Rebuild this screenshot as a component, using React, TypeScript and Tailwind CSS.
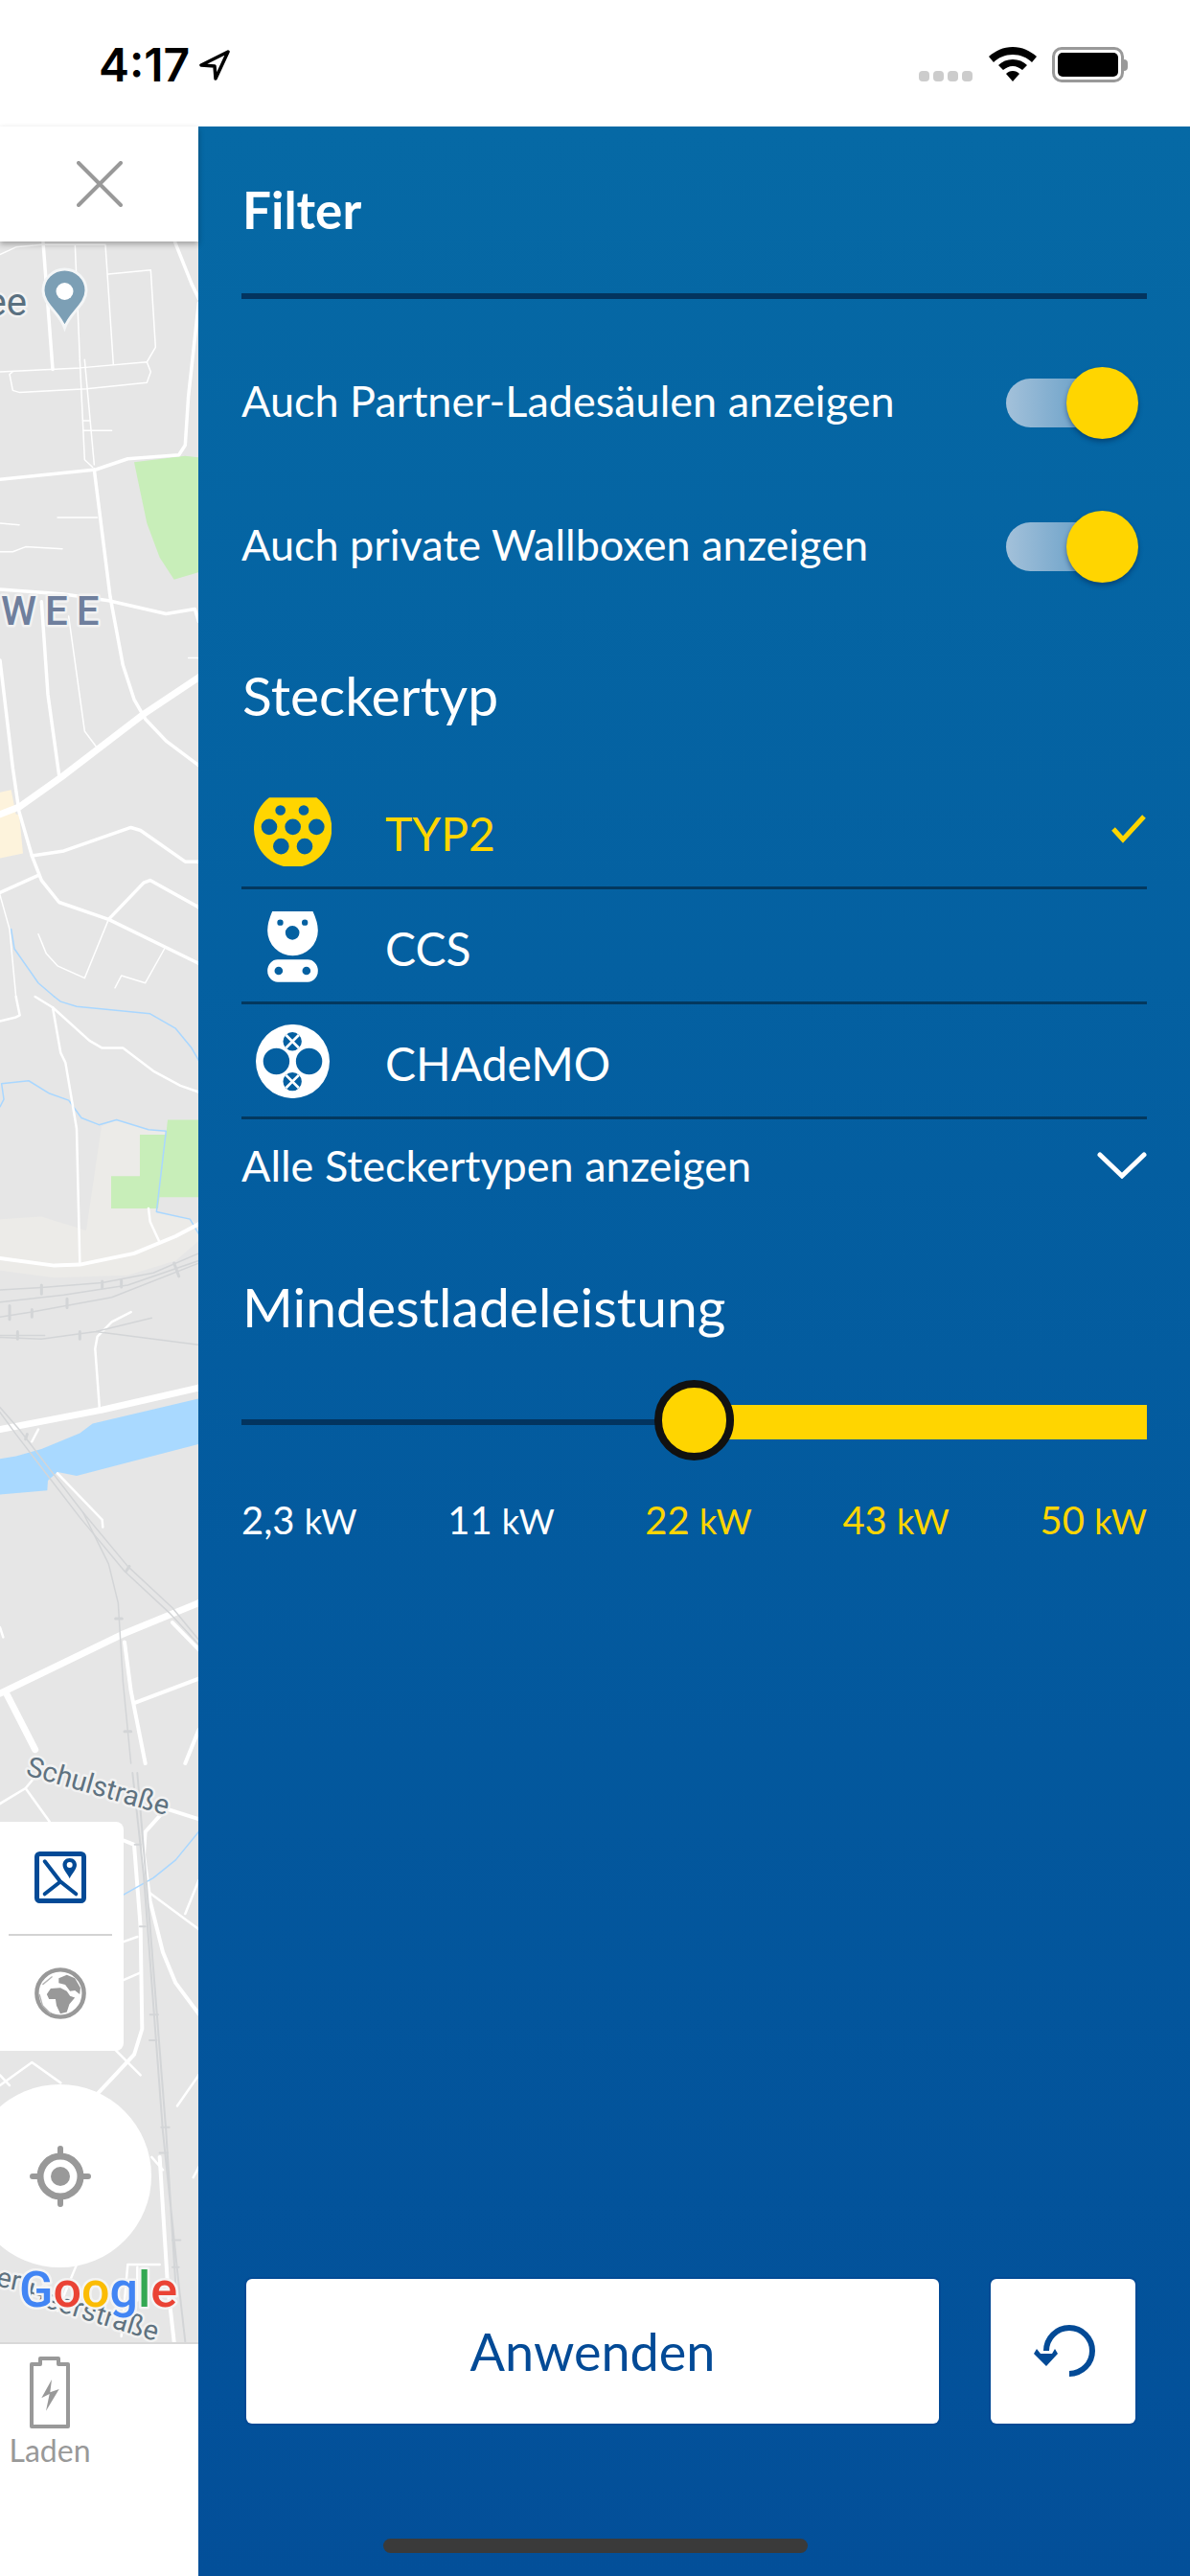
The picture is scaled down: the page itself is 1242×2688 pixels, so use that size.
const circle = (cx: number, cy: number, r: number) =>
  `M${cx - r} ${cy}a${r} ${r} 0 1 0 ${r * 2} 0a${r} ${r} 0 1 0 ${-r * 2} 0Z`

function Type2Icon() {
  const holes = [
    [155, 140, 16], [228, 140, 16], [120, 192, 25], [194, 192, 25], [268, 192, 25], [157, 253, 25], [231, 253, 25],
  ]
  return (
    <svg viewBox="72 100 243 215" className="w-[81px] h-[72px]">
      <path fillRule="evenodd" fill="#ffd500" d={`M120 100H268A122 122 0 1 1 120 100Z${holes.map(h => circle(h[0], h[1], h[2])).join('')}`} />
    </svg>
  )
}

function CcsIcon() {
  return (
    <svg viewBox="120 456 158 222" className="w-[53px] h-[74px]">
      <path fillRule="evenodd" fill="#fff" d={`M135 456H262Q278 490 278 516A79 79 0 0 1 120 516Q120 490 135 456Z${circle(160, 491, 9.5)}${circle(237, 491, 9.5)}${circle(198, 523, 22)}`} />
      <path fillRule="evenodd" fill="#fff" d={`M152 607H246A32 35 0 0 1 246 677H152A32 35 0 0 1 152 607Z${circle(155, 642, 13)}${circle(242, 642, 13)}`} />
    </svg>
  )
}

function ChademoIcon() {
  return (
    <svg viewBox="81 812 230 230" className="w-[77px] h-[77px]">
      <path fillRule="evenodd" fill="#fff" d={`${circle(196, 927, 115)}${circle(145, 927, 41)}${circle(247, 927, 41)}${circle(195, 865, 29)}${circle(195, 990, 29)}`} />
      <path stroke="#fff" strokeWidth="8" d="M175 845L215 885M215 845L175 885M175 970L215 1010M215 970L175 1010" />
    </svg>
  )
}

function Toggle() {
  return (
    <div className="relative w-[138px] h-[75px] flex items-center">
      <div className="w-[100px] h-[51px] rounded-l-full bg-gradient-to-r from-[#a3c1da] to-[#5e9ac4]" />
      <div className="absolute right-0 top-0 w-[75px] h-[75px] rounded-full bg-[#ffd500] shadow-[0_3px_5px_rgba(0,30,70,0.45)]" />
    </div>
  )
}

function PlugRow({ label, active, icon }: { label: string; active?: boolean; icon: React.ReactNode }) {
  return (
    <div className="h-[120px] flex items-center border-b-[3px] border-[#03385f]">
      <div className="w-[150px] pl-[6px] pr-[50px] flex justify-center shrink-0 mt-[2px]">{icon}</div>
      <span className={`text-[48px] leading-[60px] flex-1 pt-[7px] ${active ? 'text-[#ffd500]' : 'text-white'}`}>{label}</span>
      {active && (
        <svg viewBox="0 0 36 30" className="w-[36px] h-[30px] mr-[1px] mb-[3px]" fill="none" stroke="#ffd500" strokeWidth="5">
          <path d="M2 15L12 26L34 2" />
        </svg>
      )}
    </div>
  )
}

function PowerLabel({ value, active }: { value: string; active?: boolean }) {
  return (
    <span className={`text-[40px] leading-[50px] ${active ? 'text-[#ffd500]' : 'text-white'}`}>
      {value} <span className="text-[36px]">kW</span>
    </span>
  )
}

function MapCanvas() {
  const road = { fill: 'none', stroke: '#fff', strokeLinejoin: 'round', strokeLinecap: 'round' } as const
  const rail = { ...road, stroke: '#d3d5d7' }
  const water = { ...road, stroke: '#a9d7ff' }
  return (
    <svg viewBox="0 252 207 2192" className="absolute inset-0 w-[207px] h-[2192px] [&_path]:[vector-effect:non-scaling-stroke]">
      {/* top part, traced in crop coordinates */}
      <g transform="translate(0 240) scale(0.3333 0.5102)">
        <path fill="#c8eeb9" d="M420 475L460 600L500 670L545 715L622 700V465L580 462Z" />
        <path fill="#fdf3dc" d="M0 1150L35 1145L50 1195L60 1195L72 1275L0 1285Z" />
        <g {...road} strokeWidth="1.5">
          <path d="M0 50L50 35L130 30H330M235 30L250 265M330 30L355 275M340 90L472 82L487 240L460 270" />
          <path d="M0 290L250 282L460 270L472 290L460 312L270 325L60 332L40 328L30 295L40 290" />
          <path d="M250 265L265 470L290 485M265 265L295 480M260 390H280M260 410H350" />
          <path d="M0 600L60 603M180 588H305M0 658H40L80 648L195 652M590 875H622" />
          <path d="M215 790L265 1025L305 1060M360 1550L380 1525L455 1540L515 1470" />
          <path d="M340 1410L265 1530L180 1505L145 1480L120 1440M0 1360L30 1430L50 1568" />
        </g>
        <g {...road} strokeWidth="3.5">
          <path d="M135 25L165 285M548 25L600 110L622 140M622 150L590 340L580 440L560 460L400 468L300 490L0 510" />
          <path d="M295 490L345 750L385 890L420 960L455 1000L520 1045L622 1095" />
          <path d="M0 735L200 745L340 758L520 785L610 775L622 800M130 760L150 950L185 1115" />
          <path d="M0 880L40 1100L60 1190L100 1280L130 1330L185 1375L340 1410L622 1500" />
          <path d="M100 1280L200 1270L410 1222L440 1228L580 1292H622M0 1355L120 1320M340 1410L450 1335L470 1330L622 1385" />
        </g>
        <path {...road} strokeWidth="7" d="M0 1195L60 1180L190 1120L450 990L622 915" />
        <path {...water} strokeWidth="1.5" d="M35 1430L45 1470L120 1540L170 1568" />
      </g>
      {/* middle part */}
      <g transform="translate(0 1040) scale(0.3333 0.5102)">
        <path fill="#ecebe8" d="M0 455L130 450L270 478L318 265L365 252L465 272L520 275L490 440L595 455L622 465V500L550 540L400 570L170 575L0 560Z" />
        <path fill="#c8eeb9" d="M525 252H622V410H500L495 433H348V367H438V282H520Z" />
        <path fill="#a9d9ff" d="M0 945L50 940L130 925L250 893L290 873L622 822V915L240 980L180 972L150 990L148 1010L0 1018Z" />
        <g {...water} strokeWidth="1.5">
          <path d="M170 0L190 10L240 20L470 35L550 65L600 105L622 130" />
          <path d="M0 225L12 210L5 178L90 172L155 198L215 212L255 248L310 262L365 252L465 272L520 275L490 440L595 455L622 485" />
        </g>
        <g {...road} strokeWidth="2.5">
          <path d="M0 50L50 42L62 38L50 0M110 0L165 22L280 90L320 105L385 105L480 152L565 182L622 195" />
          <path d="M165 22L190 115L205 135L240 270L250 545M465 433L470 460L498 500M120 885L100 910M180 975L320 1070L322 1085" />
          <path d="M410 645L350 665L305 695L298 720L312 845M0 1290L10 1310" />
        </g>
        <path {...road} strokeWidth="4" d="M0 535L170 550L250 548L420 525L550 490L622 465M390 1320L410 1420L455 1568M420 1445L622 1395M540 1280L622 1335M622 1500L580 1568" />
        <path {...road} strokeWidth="7" d="M0 885L120 870L320 845L622 800M0 1425L380 1305L622 1240M20 1425L110 1540" />
        <g {...rail} strokeWidth="1.5">
          <path d="M0 600L130 595L320 585L480 565L622 525M0 625L200 610L400 590L622 540M0 655L100 645L350 615L622 545" />
          <path d="M0 693H140M0 697L130 700L300 685L475 657M300 685L622 712" />
          <path d="M0 840L60 885L160 970L260 1055L400 1165L540 1250L622 1315M0 850L50 895L150 980L250 1065L390 1175L530 1260L622 1325" />
          <path d="M260 1055L340 1160L370 1240L385 1400L410 1568" />
          <path strokeWidth="3" d="M130 590V608M210 618V636M320 582V596M380 580V594M30 632V660M100 640V655M545 545L560 572M55 685V700M250 685V700M85 895L80 905M405 1165L395 1175M362 1272H382M390 1503H410" />
        </g>
      </g>
      {/* bottom part */}
      <g transform="translate(0 1850) scale(0.3333 0.5345)">
        <g {...road} strokeWidth="4">
          <path d="M520 70L622 90M520 70L455 115L450 160L470 250L510 350L550 410L622 470M380 130L420 140L440 300L445 500L420 550L360 590L300 630" />
          <path d="M500 750L525 1000L545 1110" />
        </g>
        <g {...road} strokeWidth="2.5">
          <path d="M0 60L80 30L120 0M80 30L155 95M470 235L622 305M622 210L580 275M385 330L430 320M385 405L440 390" />
          <path d="M0 610L100 565L190 605M360 540L440 590M0 590L30 610M622 590L555 650M475 750L510 775M622 770L605 790" />
          <path d="M180 1050L240 960M380 1100L400 960H500M430 965V1030" />
        </g>
        <path {...water} strokeWidth="1.5" d="M380 240L480 205L550 170L622 115" />
        <g {...rail} strokeWidth="2">
          <path d="M415 0L450 200L510 700L560 1000L580 1110M430 0L470 300L520 700L550 1000" />
          <path d="M422 140H440M438 300H455M470 472H495M468 522H490M505 692H530M500 742H525M540 912H565M540 965H560" />
        </g>
      </g>
      <path fill="#7c9fb5" stroke="#f4f6f7" strokeWidth="3" d="M67.5 281C55 281 45 291 45 303C45 318 62 326 67.5 342C73 326 90 318 90 303C90 291 80 281 67.5 281Z" />
      <circle cx="67.5" cy="304" r="9" fill="#fff" />
      <g style={{ fontFamily: 'Roboto, sans-serif', paintOrder: 'stroke' }} stroke="#f2f2f2" strokeWidth="5" strokeLinejoin="round">
        <text x="28" y="329" textAnchor="end" fontSize="40" fill="#5a7080">ee</text>
        <text x="1" y="652" fontSize="42" fontWeight="500" letterSpacing="9" fill="#6f7f9d">WEE</text>
        <text x="26" y="1852" fontSize="29" fill="#5f7280" transform="rotate(16 26 1852)">Schulstraße</text>
        <text x="-5" y="2385" fontSize="29" fill="#5f7280" transform="rotate(12 -5 2385)">er</text>
        <text x="25" y="2401" fontSize="29" fill="#5f7280" transform="rotate(17 25 2401)">Heerstraße</text>
      </g>
    </svg>
  )
}

export default function App() {
  return (
    <div className="relative w-[1242px] h-[2688px] flex flex-col overflow-hidden bg-white font-['Lato',sans-serif]">
      {/* status bar */}
      <div className="h-[132px] shrink-0 flex items-start pt-[42px] pl-[103px] pr-[65px]">
        <span className="w-[93px] text-[48px] leading-[52px] font-semibold text-black font-['Inter',sans-serif] whitespace-nowrap">4:17</span>
        <svg viewBox="0 0 32 32" className="w-[32px] h-[32px] ml-[12px] mt-[10px]" fill="none" stroke="#000" strokeWidth="3.5" strokeLinejoin="round">
          <path d="M30 2L2 16L16 17L17 30Z" />
        </svg>
        <div className="flex-1" />
        <div className="flex gap-[4px] mt-[32px]">
          <span className="w-[11px] h-[11px] rounded-[4px] bg-[#cccccc]" />
          <span className="w-[11px] h-[11px] rounded-[4px] bg-[#cccccc]" />
          <span className="w-[11px] h-[11px] rounded-[4px] bg-[#cccccc]" />
          <span className="w-[11px] h-[11px] rounded-[4px] bg-[#cccccc]" />
        </div>
        <svg viewBox="0 0 50 36" className="w-[50px] h-[36px] ml-[17px] mt-[7px]">
          <path d="M25 0C15 0 7 4 0 10L5 16C10 11 17 8 25 8C33 8 40 11 45 16L50 10C43 4 35 0 25 0Z" />
          <path d="M25 13C19 13 14 15 10 19L15 24C18 22 21 20 25 20C29 20 32 22 35 24L40 19C36 15 31 13 25 13Z" />
          <path d="M25 25C22 25 20 26 18 28L25 36L32 28C30 26 28 25 25 25Z" />
        </svg>
        <div className="flex items-center ml-[16px] mt-[7px]">
          <div className="w-[75px] h-[37px] rounded-[10px] border-[3px] border-[#999999] p-[3px]">
            <div className="w-full h-full rounded-[5px] bg-black" />
          </div>
          <div className="w-[4px] h-[12px] rounded-r-full bg-[#999999]" />
        </div>
      </div>

      <div className="flex-1 flex min-h-0">
        {/* left side: map behind the panel */}
        <div className="w-[207px] shrink-0 flex flex-col">
          <div className="h-[120px] shrink-0 bg-white flex items-center justify-center pl-[1px] relative z-10 shadow-[0_3px_6px_rgba(0,0,0,0.3)]">
            <svg viewBox="0 0 48 48" className="w-[48px] h-[48px]" stroke="#999999" strokeWidth="4" strokeLinecap="round">
              <path d="M2 2L46 46M46 2L2 46" />
            </svg>
          </div>
          <div className="flex-1 relative bg-[#e6e6e6] overflow-hidden">
            <MapCanvas />
            <div className="absolute left-0 top-[1649px] w-[129px] h-[239px] bg-white rounded-r-[8px] flex flex-col items-center pr-[3px]">
              <svg viewBox="0 0 54 54" className="w-[54px] h-[54px] mt-[31px]" fill="none">
                <rect x="2.5" y="2.5" width="49" height="49" rx="3" stroke="#034a96" strokeWidth="5" />
                <path d="M10.7 10.3L26.7 31L43.3 44.3M10.7 44.3L26.7 31.7" stroke="#034a96" strokeWidth="4" strokeLinecap="round" />
                <path fill="#034a96" fillRule="evenodd" d="M36.7 7C32 7 29.5 10.5 29.5 14C29.5 19 34.5 23 36.7 28.3C39 23 44 19 44 14C44 10.5 41.4 7 36.7 7ZM36.7 11A3 3 0 1 1 36.7 17A3 3 0 1 1 36.7 11Z" />
              </svg>
              <div className="w-[108px] h-[2px] bg-[#d3d3d3] mt-[32px]" />
              <svg viewBox="50 397 160 160" className="w-[54px] h-[54px] mt-[33px]">
                <circle cx="130" cy="477" r="73" fill="none" stroke="#999999" strokeWidth="13" />
                <path fill="#999999" d="M125 430L150 420L175 430L192 460L190 480L175 468L160 470L145 450L125 445Z" />
                <path fill="#999999" d="M88 480L100 462L130 460L150 470L160 485L175 490L158 510L150 535L130 540L118 515L115 495L95 495Z" />
                <path fill="none" stroke="#b5b5b5" strokeWidth="4" d="M65 480L75 515L100 540M75 450L105 425" />
              </svg>
            </div>
            <div className="absolute left-[-33px] top-[1923px] w-[191px] h-[191px] rounded-full bg-white flex items-center justify-center">
              <svg viewBox="0 0 64 64" className="w-[64px] h-[64px]" fill="none" stroke="#999999">
                <circle cx="32" cy="32" r="21" strokeWidth="7" />
                <circle cx="32" cy="32" r="10" fill="#999999" stroke="none" />
                <path strokeWidth="6" strokeLinecap="round" d="M32 3V10M32 54V61M3 32H10M54 32H61" />
              </svg>
            </div>
            <svg viewBox="0 2360 207 70" className="absolute left-0 top-[2108px] w-[207px] h-[70px]">
              <text x="20" y="2407" fontSize="52" fontWeight="500" style={{ fontFamily: 'Roboto, sans-serif', paintOrder: 'stroke' }} stroke="#f4f4f4" strokeWidth="5" strokeLinejoin="round">
                <tspan fill="#4285f4">G</tspan>
                <tspan fill="#ea4335">o</tspan>
                <tspan fill="#fbbc05">o</tspan>
                <tspan fill="#4285f4">g</tspan>
                <tspan fill="#34a853">l</tspan>
                <tspan fill="#ea4335">e</tspan>
              </text>
            </svg>
          </div>
          <div className="h-[244px] shrink-0 bg-white border-t-2 border-[#d8d8d8] pt-[13px]">
            <div className="w-[104px] flex flex-col items-center">
              <svg viewBox="0 0 44 76" className="w-[44px] h-[76px]" fill="none">
                <path d="M3 8H12V2H31V8H41V73H3Z" stroke="#999999" strokeWidth="4" strokeLinejoin="round" />
                <path d="M24 24L13.3 43.3L21.7 39L18 56.7L31.7 34L22.3 37.3Z" fill="#999999" />
              </svg>
              <span className="text-[32px] leading-[36px] text-[#999999] mt-[4px]">Laden</span>
            </div>
          </div>
        </div>

        {/* filter panel */}
        <div className="flex-1 flex flex-col bg-gradient-to-b from-[#0669a5] to-[#034f99] pl-[45px] pr-[45px] pb-[159px]">
          <div className="h-[180px] shrink-0 border-b-[6px] border-[#03345f] pt-[52px] pl-[1px]">
            <h1 className="text-[53px] leading-[70px] font-bold text-white">Filter</h1>
          </div>
          <div className="h-[33px] shrink-0" />
          <div className="h-[150px] shrink-0 flex items-center justify-between pr-[9px]">
            <span className="text-[45px] leading-[60px] text-white pb-[4px]">Auch Partner-Ladesäulen anzeigen</span>
            <Toggle />
          </div>
          <div className="h-[150px] shrink-0 flex items-center justify-between pr-[9px]">
            <span className="text-[45px] leading-[60px] text-white pb-[4px]">Auch private Wallboxen anzeigen</span>
            <Toggle />
          </div>
          <div className="h-[163px] shrink-0 pt-[45px] pl-[1px]">
            <h2 className="text-[57px] leading-[70px] text-white">Steckertyp</h2>
          </div>
          <PlugRow label="TYP2" active icon={<Type2Icon />} />
          <PlugRow label="CCS" icon={<CcsIcon />} />
          <PlugRow label="CHAdeMO" icon={<ChademoIcon />} />
          <div className="h-[96px] shrink-0 flex items-center justify-between">
            <span className="text-[45px] leading-[60px] text-white">Alle Steckertypen anzeigen</span>
            <svg viewBox="0 0 52 28" className="w-[52px] h-[28px]" fill="none" stroke="#fff" strokeWidth="5" strokeLinecap="round">
              <path d="M3 3L26 25L49 3" />
            </svg>
          </div>
          <div className="h-[76px] shrink-0 mt-[64px] pl-[1px]">
            <h2 className="text-[57px] leading-[70px] text-white">Mindestladeleistung</h2>
          </div>
          <div className="relative h-[84px] shrink-0 mt-[36px] flex items-center">
            <div className="w-[470px] h-[6px] bg-[#03345f] mt-[4px]" />
            <div className="flex-1 h-[36px] bg-[#ffd500] mt-[3px]" />
            <div className="absolute left-[431px] top-0 w-[83px] h-[84px] rounded-full bg-[#ffd500] border-[8px] border-[#111111]" />
          </div>
          <div className="flex justify-between mt-[37px]">
            <PowerLabel value="2,3" />
            <PowerLabel value="11" />
            <PowerLabel value="22" active />
            <PowerLabel value="43" active />
            <PowerLabel value="50" active />
          </div>
          <div className="flex-1" />
          <div className="flex pl-[5px] pr-[12px] gap-[54px]">
            <button className="flex-1 h-[151px] rounded-[6px] bg-white text-[54px] text-[#034a96] shadow-[0_0_0_2px_#03459190]">Anwenden</button>
            <button className="w-[151px] h-[151px] rounded-[6px] bg-white flex items-center justify-center pl-[3px] shadow-[0_0_0_2px_#03459190]">
              <svg viewBox="0 0 64 55" className="w-[64px] h-[55px]" fill="none">
                <path d="M13 27A24 24 0 1 1 37 51" stroke="#034a96" strokeWidth="6" />
                <path d="M0 30L3 25L7 30H19L22 25L25 30L13 43Z" fill="#034a96" />
              </svg>
            </button>
          </div>
        </div>
      </div>
      <div className="absolute left-[400px] top-[2649px] w-[443px] h-[15px] rounded-full bg-[#3a3a3a]" />
    </div>
  )
}
